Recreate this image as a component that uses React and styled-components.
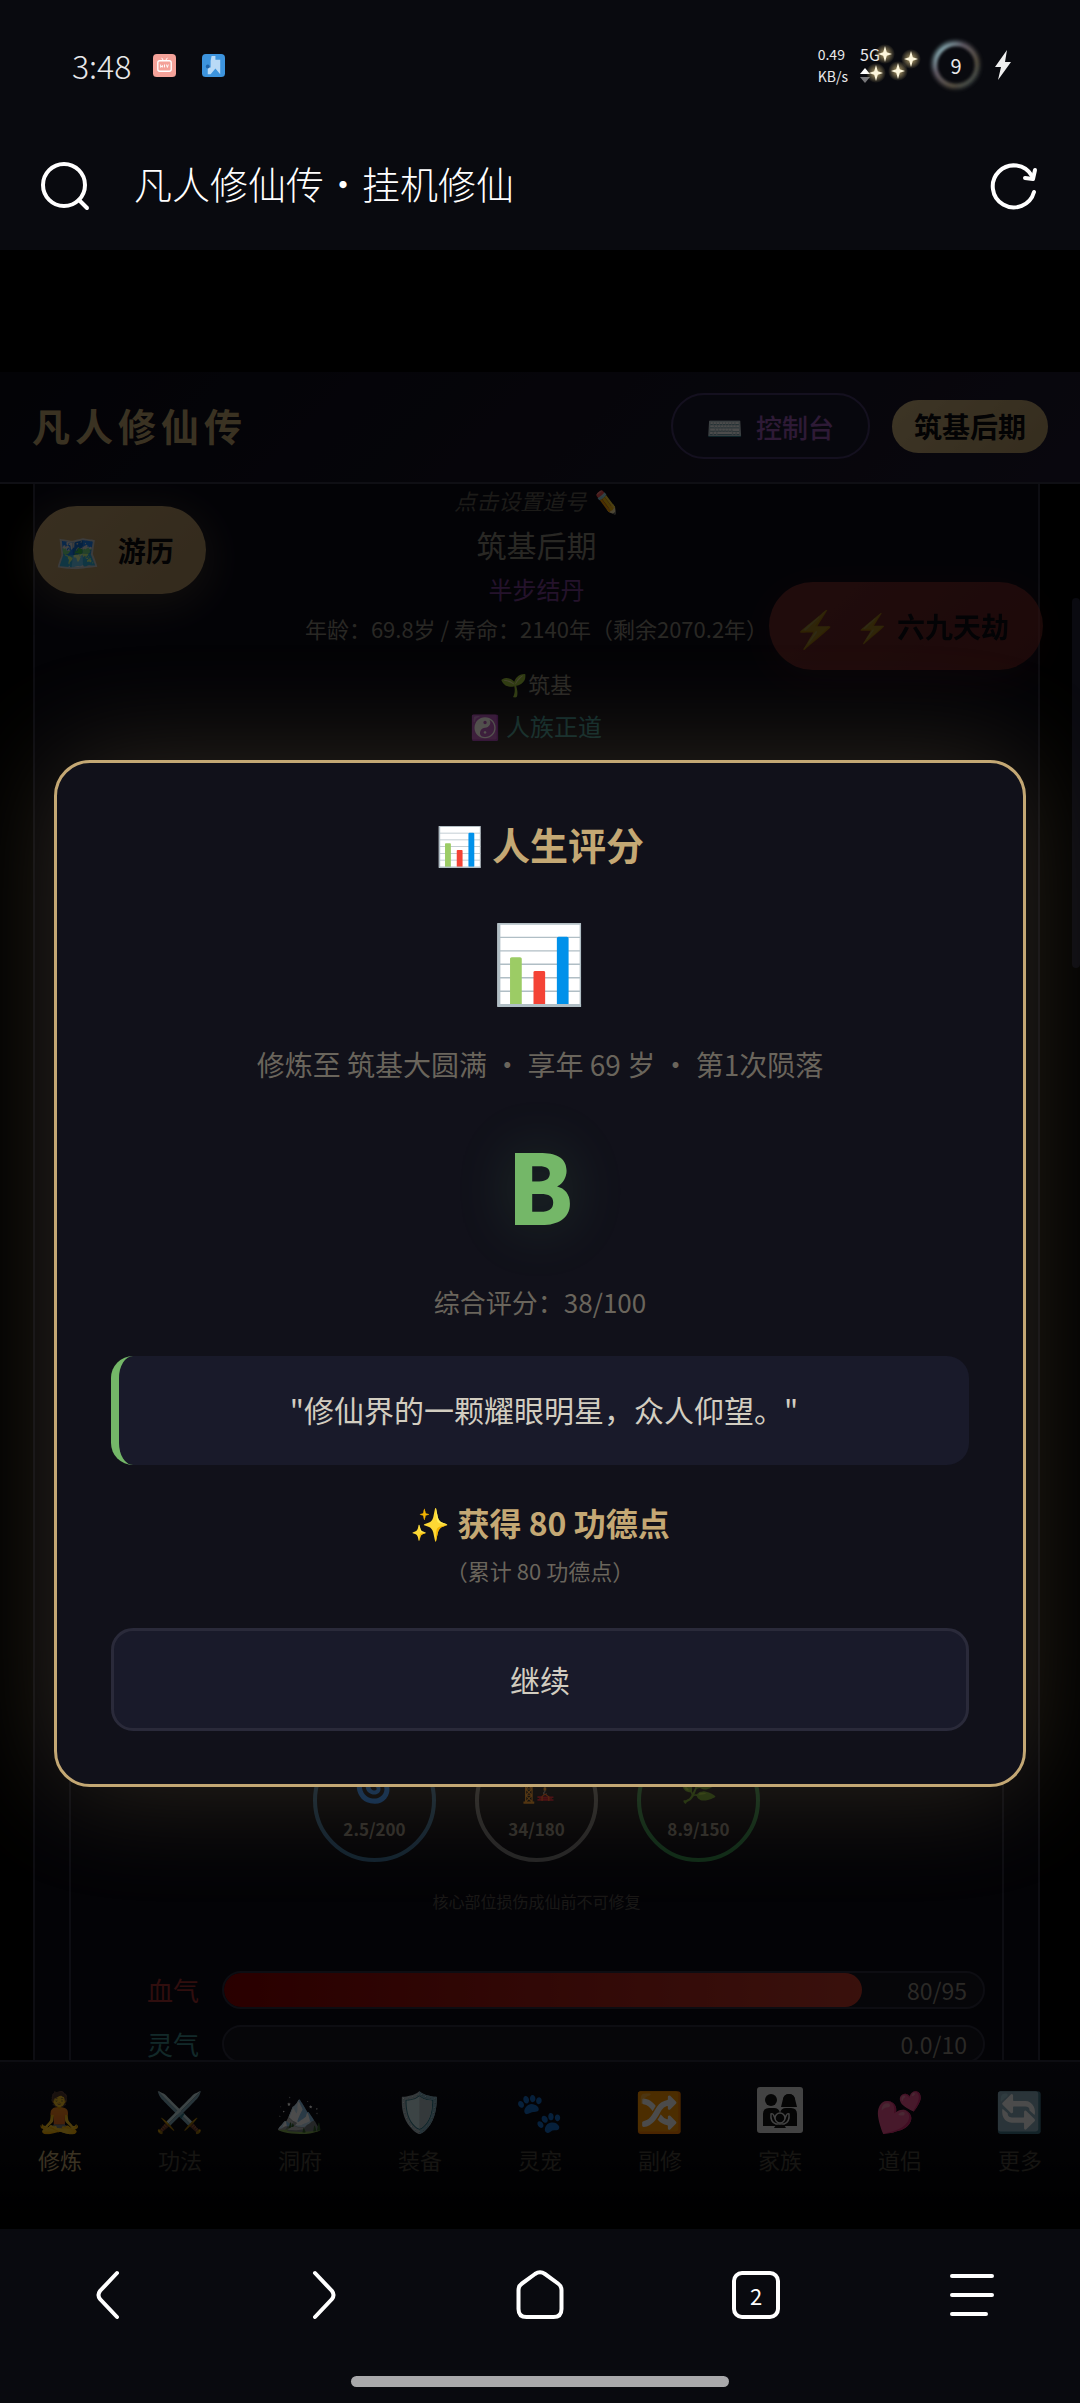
import React from "react";
import styled, { createGlobalStyle } from "styled-components";

const GlobalStyle = createGlobalStyle`
  * {
    box-sizing: border-box;
  }
  body {
    margin: 0;
    background: #090a0f;
    font-family: "Noto Sans CJK SC", "Noto Color Emoji", sans-serif;
  }
  button {
    font-family: inherit;
    border: none;
    background: none;
    padding: 0;
    margin: 0;
  }
`;

const Screen = styled.div`
  display: flex;
  flex-direction: column;
  min-height: 100vh;
`;

/* phone status bar */
const StatusBar = styled.header`
  display: flex;
  justify-content: space-between;
  align-items: center;
  height: 130px;
  padding: 0 68px 0 72px;
  color: #e8e8ea;
`;
const StatusGroup = styled.div`
  display: flex;
  align-items: center;
  gap: ${(props) => props.$gap}px;
`;
const Clock = styled.span`
  font-size: 32px;
  line-height: 40px;
  font-weight: 300;
  margin-right: -4px;
`;
const TinyText = styled.div`
  display: flex;
  flex-direction: column;
  font-size: 14px;
  line-height: 22px;
`;
const Signal = styled.div`
  position: relative;
  width: 58px;
  font-size: 16px;
  line-height: 22px;
  svg {
    display: block;
  }
`;
const Sparkles = styled.svg`
  position: absolute;
  top: -2px;
  left: 4px;
`;
const Battery = styled.div`
  position: relative;
  display: flex;
  align-items: center;
  justify-content: center;
  width: 56px;
  height: 56px;
  font-size: 20px;
  svg {
    position: absolute;
    inset: 0;
  }
`;

/* browser address bar */
const AddressBar = styled.div`
  display: flex;
  align-items: center;
  height: 120px;
  padding: 0 40px 8px;
  color: #fff;
`;
const PageTitle = styled.div`
  flex: 1;
  padding: 0 0 6px 44px;
  font-size: 38px;
  line-height: 50px;
  font-weight: 300;
`;
const IconButton = styled.button`
  display: flex;
  align-items: center;
  justify-content: center;
  color: #fff;
`;

/* game page */
const Page = styled.div`
  position: relative;
  flex: 1;
  display: flex;
  flex-direction: column;
  padding-top: 122px;
  background: #000;
  overflow: hidden;
`;
const GameHeader = styled.div`
  display: flex;
  align-items: center;
  height: 112px;
  padding: 0 32px 2px;
  gap: 22px;
  background: linear-gradient(135deg, #0b0b16 0%, #1f1a30 100%);
  border-bottom: 2px solid #343444;
`;
const GameTitle = styled.h1`
  flex: 1;
  margin: 0;
  padding-bottom: 2px;
  font-size: 38px;
  line-height: 50px;
  font-weight: 700;
  letter-spacing: 5px;
  color: #c4a874;
`;
const ConsoleButton = styled.button`
  display: flex;
  align-items: center;
  justify-content: center;
  gap: 12px;
  height: 66px;
  padding: 0 34px;
  border: 2px solid #45386a;
  border-radius: 33px;
  font-size: 26px;
  font-weight: 500;
  color: #9b59b6;
  background: #1a1a2e;
`;
const RealmBadge = styled.span`
  padding: 0 22px;
  border-radius: 27px;
  font-size: 28px;
  line-height: 53px;
  font-weight: 700;
  color: #0a0a0f;
  background: linear-gradient(135deg, #cbb07e, #b29766);
`;

const Main = styled.main`
  position: relative;
  flex: 1;
  display: flex;
  overflow: hidden;
  background: #000;
`;
const Sheet = styled.section`
  flex: 1;
  display: flex;
  flex-direction: column;
  justify-content: space-between;
  margin: 0 40px 0 33px;
  border: solid #2c2c3c;
  border-width: 0 2px;
  background: #0b0b17;
`;
const Scrollbar = styled.div`
  position: absolute;
  top: 114px;
  right: 0;
  width: 8px;
  height: 370px;
  border-radius: 4px;
  background: #222238;
`;
const Profile = styled.div`
  display: flex;
  flex-direction: column;
  align-items: center;
`;
const ProfileLine = styled.div`
  font-size: ${(props) => props.$size || 22}px;
  line-height: ${(props) => props.$height || 38}px;
  font-style: ${(props) => (props.$italic ? "italic" : "normal")};
  color: ${(props) => props.$color || "#8a857a"};
`;

const FloatButton = styled.button`
  position: absolute;
  display: flex;
  align-items: center;
  gap: 18px;
  height: 88px;
  border-radius: 44px;
  font-size: 28px;
  font-weight: 700;
  color: #0a0a0f;
`;
const TravelButton = styled(FloatButton)`
  top: 22px;
  left: 33px;
  padding: 0 32px 0 22px;
  background: linear-gradient(135deg, #bd9e6c, #ac8d60);
  box-shadow: 0 8px 44px rgba(201, 169, 110, 0.3);
`;
const ThunderButton = styled(FloatButton)`
  top: 98px;
  right: 37px;
  padding: 0 34px 0 24px;
  background: linear-gradient(135deg, #b04038, #9c302b);
  box-shadow: 0 8px 44px rgba(150, 50, 40, 0.3);
  opacity: 0.6;
`;
const Emoji = styled.span`
  display: flex;
  align-items: center;
  justify-content: center;
  height: ${(props) => props.$size}px;
  font-size: ${(props) => props.$size}px;
  line-height: 1;
`;

const BodyPanel = styled.div`
  display: flex;
  flex-direction: column;
  align-items: stretch;
  margin: 0 34px -3px;
  padding: 40px 17px 0 76px;
  border: solid #2c2c3c;
  border-width: 2px 2px 0;
`;
const Organs = styled.div`
  display: flex;
  justify-content: center;
  gap: 39px;
  margin-right: 59px;
`;
const Organ = styled.div`
  display: flex;
  flex-direction: column;
  align-items: center;
  width: 123px;
  height: 123px;
  padding-top: 24px;
  border: 4px solid ${(props) => props.$color};
  border-radius: 50%;
  font-size: 17px;
  line-height: 24px;
  font-weight: 700;
  color: #8f8a80;
  gap: 18px;
`;
const Note = styled.p`
  margin: 26px 59px 57px 0;
  text-align: center;
  font-size: 16px;
  line-height: 26px;
  color: #55524c;
`;
const Bars = styled.div`
  display: flex;
  flex-direction: column;
  gap: 16px;
`;
const BarRow = styled.div`
  display: flex;
  align-items: center;
  gap: 23px;
  font-size: 26px;
  line-height: 36px;
  color: ${(props) => props.$color};
`;
const Track = styled.div`
  position: relative;
  flex: 1;
  height: 38px;
  border: 2px solid #2c2c3c;
  border-radius: 19px;
  background: #14141f;
  overflow: hidden;
`;
const Fill = styled.div`
  height: 100%;
  border-radius: 17px;
  background: linear-gradient(90deg, #8b0000, #c0392b);
`;
const BarValue = styled.span`
  position: absolute;
  top: 0;
  right: 16px;
  font-size: 23px;
  line-height: 34px;
  color: #8f8a80;
`;

const TabBar = styled.nav`
  display: flex;
  height: 169px;
  border-top: 2px solid #2c2c3c;
  background: linear-gradient(180deg, #11111c, #000);
`;
const Tab = styled.button`
  flex: 1;
  display: flex;
  flex-direction: column;
  align-items: center;
  padding-top: 28px;
  gap: 13px;
  font-size: 22px;
  line-height: 34px;
  color: ${(props) => (props.$active ? "#c4a874" : "#4a463e")};
`;

/* result dialog */
const Overlay = styled.div`
  position: absolute;
  inset: 0;
  display: flex;
  align-items: center;
  justify-content: center;
  padding: 68px 54px 0;
  background: rgba(0, 0, 0, 0.7);
`;
const Dialog = styled.div`
  flex: 1;
  display: flex;
  flex-direction: column;
  align-items: center;
  padding: 51px 54px 53px;
  border: 3px solid #c4a874;
  border-radius: 36px;
  background: #11111a;
  color: #d2cdc0;
  box-shadow: 0 0 115px rgba(201, 175, 125, 0.22);
`;
const DialogTitle = styled.h2`
  margin: 0;
  font-size: 38px;
  line-height: 60px;
  font-weight: 700;
  color: #c4a874;
`;
const BigEmoji = styled.div`
  margin-top: 30px;
  font-size: 76px;
  line-height: 108px;
`;
const Muted = styled.p`
  margin: ${(props) => props.$top}px 0 0;
  font-size: ${(props) => props.$size}px;
  line-height: ${(props) => props.$height}px;
  color: #6a655c;
`;
const Grade = styled.div`
  margin-top: 40px;
  font-size: 96px;
  line-height: 116px;
  font-weight: 900;
  color: #74b768;
  text-shadow: 0 0 60px rgba(100, 183, 120, 0.2);
`;
const Quote = styled.blockquote`
  align-self: stretch;
  margin: 34px 0 0;
  padding: 29px 30px 31px;
  border-left: 8px solid #74b768;
  border-radius: 22px;
  background: #191a2a;
  text-align: center;
  font-size: 30px;
  line-height: 49px;
`;
const Reward = styled.div`
  margin-top: 33px;
  font-size: 32px;
  line-height: 48px;
  font-weight: 700;
  color: #c4a874;
`;
const ContinueButton = styled.button`
  align-self: stretch;
  height: 103px;
  margin-top: 41px;
  padding-bottom: 2px;
  border: 3px solid #2a2a3a;
  border-radius: 22px;
  background: #191a2a;
  font-size: 30px;
  color: #d2cdc0;
`;

/* browser bottom bar */
const BrowserNav = styled.nav`
  display: flex;
  height: 132px;
`;
const NavButton = styled(IconButton)`
  flex: 1;
`;
const TabCount = styled.span`
  display: flex;
  align-items: center;
  justify-content: center;
  width: 48px;
  height: 48px;
  border: 4px solid #fff;
  border-radius: 10px;
  font-size: 22px;
`;
const HomeIndicator = styled.div`
  align-self: center;
  width: 35%;
  height: 11px;
  margin: 15px 0 16px;
  border-radius: 6px;
  background: #a9a9ab;
`;

const FamilyIcon = () => (
  <svg width="46" height="46" viewBox="0 0 46 46">
    <rect width="46" height="46" rx="3" fill="#e0e0e0" />
    <g fill="#111">
      <circle cx="14" cy="13" r="6" />
      <circle cx="32" cy="13" r="6" />
      <path d="M26 12q1-5 6-5t6 5l2 8H24Z" />
      <path d="M6 39V27q0-6 6-6h5q5 0 6 5 1-5 6-5h5q6 0 6 6v12Z" />
    </g>
    <g fill="#111" stroke="#e0e0e0" strokeWidth="1.500">
      <path d="M14 27q-1 8 5 10h8q6-2 5-10-2-1-3 2-1 3-3 3h-6q-2 0-3-3-1-3-3-2Z" />
      <circle cx="23" cy="31" r="5" />
    </g>
    <path d="M17 41q2-4 6-3 4-1 6 3Z" fill="#111" />
  </svg>
);

const tabs = [
  { icon: "🧘", label: "修炼" },
  { icon: "⚔️", label: "功法" },
  { icon: "🏔️", label: "洞府" },
  { icon: "🛡️", label: "装备" },
  { icon: "🐾", label: "灵宠" },
  { icon: "🔀", label: "副修" },
  { icon: <FamilyIcon />, label: "家族" },
  { icon: "💕", label: "道侣" },
  { icon: "🔄", label: "更多" },
];

const organs = [
  { icon: "🌀", value: "2.5/200", color: "#3a7099" },
  { icon: "🏗️", value: "34/180", color: "#77777a" },
  { icon: "🌿", value: "8.9/150", color: "#2f8a4c" },
];

const bars = [
  { label: "血气", value: "80/95", percent: 84, color: "#a03030" },
  { label: "灵气", value: "0.0/10", percent: 0, color: "#3f8a8a" },
];

const Star = ({ x, y }) => (
  <g transform={`translate(${x} ${y})`}>
    <circle r="10" fill="url(#starGlow)" />
    <path d="M0-8 1.8-1.8 7 0 1.8 1.8 0 8-1.8 1.8-7 0-1.8-1.8Z" fill="#fdf6dc" />
  </g>
);

const StatusIcons = () => (
  <StatusGroup $gap={12}>
    <TinyText>
      <span>0.49</span>
      <span>KB/s</span>
    </TinyText>
    <Signal>
      5G
      <svg width="14" height="22" viewBox="0 0 14 22">
        <path d="M0 9 5 3l5 6Z" fill="#fff" />
        <path d="M0 12h10l-5 6Z" fill="#77777a" />
      </svg>
      <Sparkles width="72" height="50" viewBox="0 0 72 50">
        <defs>
          <radialGradient id="starGlow">
            <stop offset="0" stopColor="#e8cf8a" stopOpacity="0.8" />
            <stop offset="1" stopColor="#e8cf8a" stopOpacity="0" />
          </radialGradient>
        </defs>
        <Star x={21} y={13} />
        <Star x={47} y={18} />
        <Star x={12} y={32} />
        <Star x={34} y={30} />
      </Sparkles>
    </Signal>
  </StatusGroup>
);

const App = () => {
  return (
    <Screen>
      <GlobalStyle />
      <StatusBar>
        <StatusGroup $gap={26}>
          <Clock>3:48</Clock>
          <svg width="23" height="23" viewBox="0 0 24 24">
            <rect width="24" height="24" rx="4" fill="#f4a299" />
            <rect x="5" y="7" width="14" height="11" rx="2" fill="none" stroke="#fff" strokeWidth="1.4" />
            <path d="M9 4l2 3M15 4l-2 3M8 11v3l2-2v2M12 11v3M14 11l1 3 1-3" fill="none" stroke="#fff" strokeWidth="1" />
          </svg>
          <svg width="23" height="23" viewBox="0 0 24 24">
            <rect width="24" height="24" rx="4" fill="#3d94dd" />
            <path d="M10 2h4v4h5v15l-5-6-5 6H6V14h3V7Z" fill="#b9daf6" />
            <circle cx="6" cy="13" r="2" fill="#1d62a8" />
          </svg>
        </StatusGroup>
        <StatusGroup $gap={10}>
          <StatusIcons />
          <Battery>
            <svg width="56" height="56" viewBox="0 0 56 56">
              <defs>
                <linearGradient id="ring" x1="0" y1="0" x2="1" y2="1">
                  <stop offset="0" stopColor="#a7e6ea" />
                  <stop offset="0.35" stopColor="#6c6470" />
                  <stop offset="0.7" stopColor="#5c5444" />
                  <stop offset="1" stopColor="#3d4f55" />
                </linearGradient>
                <filter id="ringBlur" x="-20%" y="-20%" width="140%" height="140%">
                  <feGaussianBlur stdDeviation="1.4" />
                </filter>
              </defs>
              <circle cx="28" cy="28" r="22" fill="none" stroke="url(#ring)" strokeWidth="7" opacity="0.35" filter="url(#ringBlur)" />
              <circle cx="28" cy="28" r="21" fill="none" stroke="url(#ring)" strokeWidth="3" filter="url(#ringBlur)" />
            </svg>
            9
          </Battery>
          <svg width="18" height="32" viewBox="0 0 18 32">
            <path d="M13 1 1 18h6L4 31 17 13h-6Z" fill="#f0f0f0" />
          </svg>
        </StatusGroup>
      </StatusBar>

      <AddressBar>
        <IconButton aria-label="搜索">
          <svg width="50" height="50" viewBox="0 0 50 50" fill="none" stroke="#fff" strokeWidth="4" strokeLinecap="round">
            <circle cx="24" cy="24" r="21" />
            <path d="M39 39l8 8" />
          </svg>
        </IconButton>
        <PageTitle>凡人修仙传·挂机修仙</PageTitle>
        <IconButton aria-label="刷新">
          <svg width="52" height="50" viewBox="0 0 52 50" fill="none" stroke="#fff" strokeWidth="4" strokeLinecap="round" strokeLinejoin="round">
            <path d="M46 31A21 21 0 1 1 44 15" />
            <path d="M37 17l8 1 2-9" />
          </svg>
        </IconButton>
      </AddressBar>

      <Page>
        <GameHeader>
          <GameTitle>凡人修仙传</GameTitle>
          <ConsoleButton>
            <Emoji $size={30}>⌨️</Emoji>
            <span>控制台</span>
          </ConsoleButton>
          <RealmBadge>筑基后期</RealmBadge>
        </GameHeader>

        <Main>
          <Sheet>
            <Profile>
              <ProfileLine $italic $height={32} $color="#5e5a52">
                点击设置道号 ✏️
              </ProfileLine>
              <ProfileLine $size={30} $height={56}>筑基后期</ProfileLine>
              <ProfileLine $size={24} $height={34} $color="#7a3f92">半步结丹</ProfileLine>
              <ProfileLine $height={44}>年龄：69.8岁 / 寿命：2140年（剩余2070.2年）</ProfileLine>
              <ProfileLine $height={66}>🌱筑基</ProfileLine>
              <ProfileLine $size={24} $height={20} $color="#2f8a8a">☯️ 人族正道</ProfileLine>
            </Profile>
            <BodyPanel>
              <Organs>
                {organs.map((organ) => (
                  <Organ key={organ.value} $color={organ.color}>
                    <Emoji $size={32}>{organ.icon}</Emoji>
                    {organ.value}
                  </Organ>
                ))}
              </Organs>
              <Note>核心部位损伤成仙前不可修复</Note>
              <Bars>
                {bars.map((bar) => (
                  <BarRow key={bar.label} $color={bar.color}>
                    {bar.label}
                    <Track>
                      <Fill style={{ width: `${bar.percent}%` }} />
                      <BarValue>{bar.value}</BarValue>
                    </Track>
                  </BarRow>
                ))}
              </Bars>
            </BodyPanel>
          </Sheet>
          <TravelButton>
            <Emoji $size={36}>🗺️</Emoji>
            游历
          </TravelButton>
          <ThunderButton>
            <Emoji $size={36}>⚡</Emoji>
            ⚡ 六九天劫
          </ThunderButton>
          <Scrollbar />
        </Main>

        <TabBar>
          {tabs.map((tab, index) => (
            <Tab key={tab.label} $active={index === 0}>
              <Emoji $size={39}>{tab.icon}</Emoji>
              {tab.label}
            </Tab>
          ))}
        </TabBar>

        <Overlay>
          <Dialog role="dialog" aria-labelledby="dialog-title">
            <DialogTitle id="dialog-title">📊 人生评分</DialogTitle>
            <BigEmoji>📊</BigEmoji>
            <Muted $top={30} $size={28} $height={44}>
              修炼至 筑基大圆满 • 享年 69 岁 • 第1次陨落
            </Muted>
            <Grade>B</Grade>
            <Muted $top={40} $size={26} $height={40}>综合评分：38/100</Muted>
            <Quote>"修仙界的一颗耀眼明星，众人仰望。"</Quote>
            <Reward>✨ 获得 80 功德点</Reward>
            <Muted $top={7} $size={22} $height={34}>（累计 80 功德点）</Muted>
            <ContinueButton>继续</ContinueButton>
          </Dialog>
        </Overlay>
      </Page>

      <BrowserNav>
        <NavButton aria-label="后退">
          <svg width="28" height="52" viewBox="0 0 28 52" fill="none" stroke="#fff" strokeWidth="4" strokeLinecap="round">
            <path d="M23 4 6 22Q3 26 6 30L23 48" />
          </svg>
        </NavButton>
        <NavButton aria-label="前进">
          <svg width="28" height="52" viewBox="0 0 28 52" fill="none" stroke="#fff" strokeWidth="4" strokeLinecap="round">
            <path d="M5 4 22 22Q25 26 22 30L5 48" />
          </svg>
        </NavButton>
        <NavButton aria-label="主页">
          <svg width="52" height="52" viewBox="0 0 52 52" fill="none" stroke="#fff" strokeWidth="4" strokeLinejoin="round">
            <path d="M21 5Q26 1.500 31 5L44 14.500Q47.500 17 47.500 21V40Q47.500 48 39.500 48H12.500Q4.500 48 4.500 40V21Q4.500 17 8 14.500Z" />
          </svg>
        </NavButton>
        <NavButton aria-label="标签页">
          <TabCount>2</TabCount>
        </NavButton>
        <NavButton aria-label="菜单">
          <svg width="46" height="48" viewBox="0 0 46 48" stroke="#fff" strokeWidth="4" strokeLinecap="round">
            <path d="M3 5h40M3 24h40M3 43h34" />
          </svg>
        </NavButton>
      </BrowserNav>
      <HomeIndicator />
    </Screen>
  );
};

export default App;
